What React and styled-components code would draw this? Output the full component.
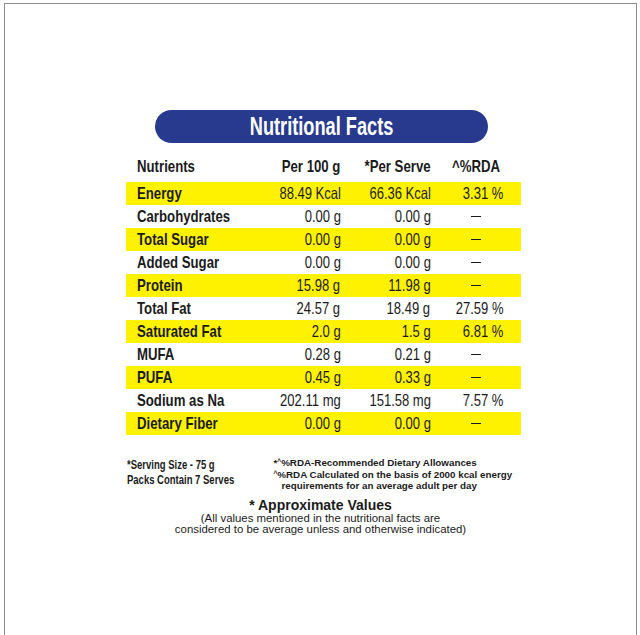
import React from 'react'
import styled, { createGlobalStyle } from 'styled-components'

const GlobalStyle = createGlobalStyle`
  html, body {
    margin: 0;
    padding: 0;
    background: #ffffff;
  }
  body {
    font-family: "Liberation Sans", Arial, Helvetica, sans-serif;
    color: #1b1b1b;
  }
`

// Helvetica Condensed look: Liberation Sans squeezed horizontally
const Squeeze = styled.span`
  display: inline-block;
  white-space: nowrap;
  transform: scaleX(${p => p.$x || 0.79});
  transform-origin: ${p => p.$origin || 'left'} center;
`

const Frame = styled.div`
  box-sizing: border-box;
  margin: 3px 0 0 4px;
  width: 633px;
  height: 640px;
  border: 1.5px solid #8c8c8c;
  border-bottom: none;
  display: flex;
  flex-direction: column;
  align-items: center;
  padding-top: 106px;
`

const Banner = styled.div`
  width: 333px;
  height: 33px;
  border-radius: 17px;
  background: #283a8e;
  color: #ffffff;
  display: flex;
  align-items: center;
  justify-content: center;
  font-weight: 700;
  font-size: 26px;
  margin-left: 2px;
`

const Table = styled.div`
  margin-top: 13px;
  margin-left: 5px;
  width: 395px;
  display: grid;
  grid-template-columns: 125px 90px 94px 86px;
  font-size: 16.5px;
`

const Row = styled.div`
  display: contents;

  & > div {
    height: ${p => (p.$head ? '25px' : '23px')};
    padding-top: ${p => (p.$head ? '1px' : '0')};
    background: ${p => (p.$shade ? '#fff200' : 'transparent')};
    font-weight: ${p => (p.$head ? 700 : 400)};
    align-items: ${p => (p.$head ? 'flex-start' : 'center')};
  }
`

const Cell = styled.div`
  display: flex;
  white-space: nowrap;
  justify-content: flex-end;
  padding-right: ${p => p.$right || '0'};
`

const Name = styled(Cell)`
  justify-content: flex-start;
  padding-left: 11px;
  font-weight: 700 !important;
`

const Dash = styled.span`
  display: inline-block;
  width: 10px;
  height: 1.5px;
  margin-right: 2px;
  background: #1b1b1b;
`

const Footer = styled.div`
  width: 395px;
  margin-left: 5px;
  margin-top: 21.5px;
  display: flex;
  align-items: flex-start;
`

const ServeNote = styled.div`
  width: 147px;
  padding-left: 1px;
  margin-top: 1px;
  font-weight: 700;
  font-size: 12.5px;
  line-height: 15.5px;
`

const RdaNote = styled.div`
  font-weight: 700;
  font-size: 9.8px;
  line-height: 10.5px;
`

const RdaLine = styled.div`
  padding-left: ${p => p.$indent || '0'};
  margin-bottom: ${p => p.$gap || '0'};
  white-space: nowrap;
`

const Caret = styled.span`
  font-size: 6.5px;
  vertical-align: 2px;
`

const Approx = styled.div`
  margin-top: 7px;
  text-align: center;
`

const ApproxTitle = styled.div`
  font-weight: 700;
  font-size: 14px;
  line-height: 15px;
`

const ApproxText = styled.div`
  font-size: 11.4px;
  line-height: 10.5px;
`

const rows = [
  ['Energy', '88.49 Kcal', '66.36 Kcal', '3.31 %'],
  ['Carbohydrates', '0.00 g', '0.00 g', null],
  ['Total Sugar', '0.00 g', '0.00 g', null],
  ['Added Sugar', '0.00 g', '0.00 g', null],
  ['Protein', '15.98 g', '11.98 g', null],
  ['Total Fat', '24.57 g', '18.49 g', '27.59 %'],
  ['Saturated Fat', '2.0 g', '1.5 g', '6.81 %'],
  ['MUFA', '0.28 g', '0.21 g', null],
  ['PUFA', '0.45 g', '0.33 g', null],
  ['Sodium as Na', '202.11 mg', '151.58 mg', '7.57 %'],
  ['Dietary Fiber', '0.00 g', '0.00 g', null],
]

export default function App() {
  return (
    <>
      <GlobalStyle />
      <Frame>
        <Banner>
          <Squeeze $x={0.7} $origin="center">Nutritional Facts</Squeeze>
        </Banner>
        <Table>
          <Row $head>
            <Name><Squeeze $x={0.8}>Nutrients</Squeeze></Name>
            <Cell><Squeeze $x={0.8} $origin="right">Per 100 g</Squeeze></Cell>
            <Cell $right="4px"><Squeeze $x={0.8} $origin="right">*Per Serve</Squeeze></Cell>
            <Cell $right="20px"><Squeeze $x={0.8} $origin="right">^%RDA</Squeeze></Cell>
          </Row>
          {rows.map(([name, per100, perServe, rda], i) => (
            <Row key={name} $shade={i % 2 === 0}>
              <Name><Squeeze $x={0.8}>{name}</Squeeze></Name>
              <Cell><Squeeze $origin="right">{per100}</Squeeze></Cell>
              <Cell $right="4px"><Squeeze $origin="right">{perServe}</Squeeze></Cell>
              <Cell $right={rda ? '17px' : '38px'}>
                {rda ? <Squeeze $origin="right">{rda}</Squeeze> : <Dash />}
              </Cell>
            </Row>
          ))}
        </Table>
        <Footer>
          <ServeNote>
            <div><Squeeze $x={0.76}>*Serving Size - 75 g</Squeeze></div>
            <div><Squeeze $x={0.76}>Packs Contain 7 Serves</Squeeze></div>
          </ServeNote>
          <RdaNote>
            <RdaLine $gap="1px">*<Caret>^</Caret>%RDA-Recommended Dietary Allowances</RdaLine>
            <RdaLine><Caret>^</Caret>%RDA Calculated on the basis of 2000 kcal energy</RdaLine>
            <RdaLine $indent="8px">requirements for an average adult per day</RdaLine>
          </RdaNote>
        </Footer>
        <Approx>
          <ApproxTitle>* Approximate Values</ApproxTitle>
          <ApproxText>(All values mentioned in the nutritional facts are</ApproxText>
          <ApproxText>considered to be average unless and otherwise indicated)</ApproxText>
        </Approx>
      </Frame>
    </>
  )
}
